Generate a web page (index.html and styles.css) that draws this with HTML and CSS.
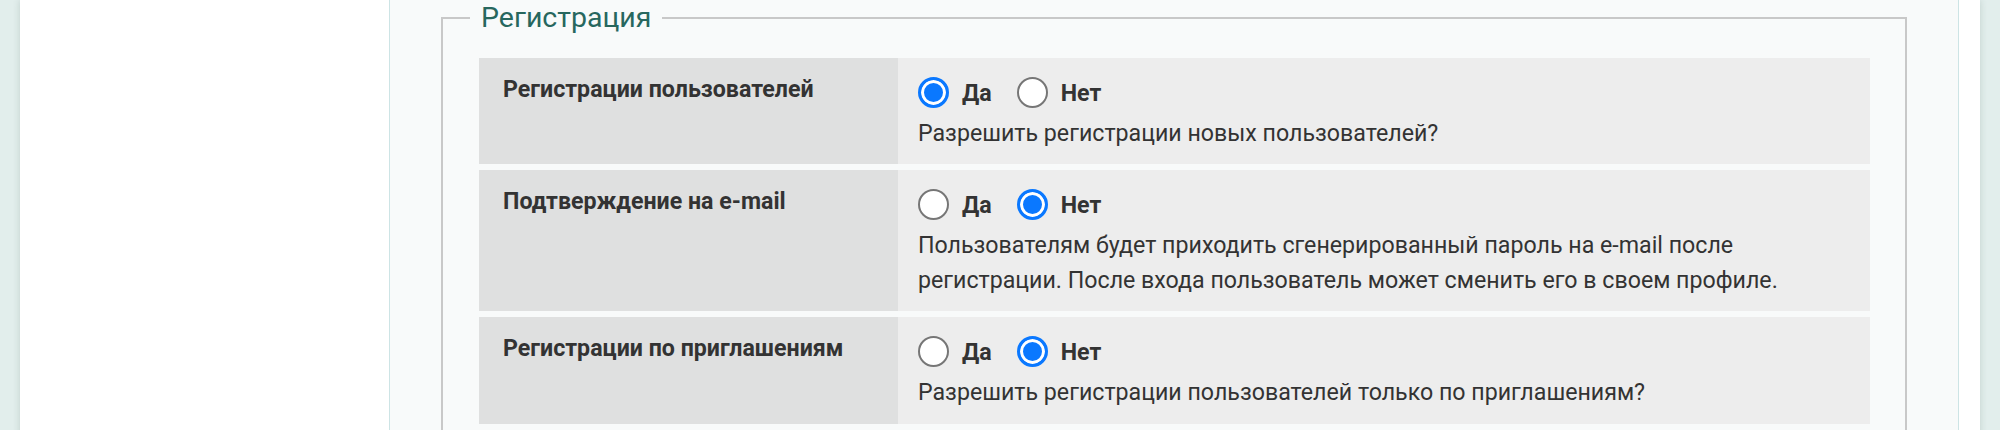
FILE: index.html
```html
<!DOCTYPE html>
<html lang="ru">
<head>
<meta charset="utf-8">
<title>Регистрация</title>
<link rel="stylesheet" href="styles.css">
</head>
<body>
<div class="page">
  <aside class="sidebar"></aside>
  <main class="content">
    <fieldset class="group">
      <legend class="group-title">Регистрация</legend>
      <div class="row">
        <div class="label">Регистрации пользователей</div>
        <div class="value">
          <div class="radios">
            <label class="opt"><input class="radio" type="radio" name="r1" checked><span>Да</span></label>
            <label class="opt"><input class="radio" type="radio" name="r1"><span>Нет</span></label>
          </div>
          <p class="desc">Разрешить регистрации новых пользователей?</p>
        </div>
      </div>
      <div class="row">
        <div class="label">Подтверждение на e-mail</div>
        <div class="value">
          <div class="radios">
            <label class="opt"><input class="radio" type="radio" name="r2"><span>Да</span></label>
            <label class="opt"><input class="radio" type="radio" name="r2" checked><span>Нет</span></label>
          </div>
          <p class="desc">Пользователям будет приходить сгенерированный пароль на e-mail после регистрации. После входа пользователь может сменить его в своем профиле.</p>
        </div>
      </div>
      <div class="row">
        <div class="label">Регистрации по приглашениям</div>
        <div class="value">
          <div class="radios">
            <label class="opt"><input class="radio" type="radio" name="r3"><span>Да</span></label>
            <label class="opt"><input class="radio" type="radio" name="r3" checked><span>Нет</span></label>
          </div>
          <p class="desc">Разрешить регистрации пользователей только по приглашениям?</p>
        </div>
      </div>
    </fieldset>
  </main>
</div>
</body>
</html>
```

FILE: styles.css
```css
html, body {
  margin: 0;
  padding: 0;
}
body {
  background: #e2eeec;
  font-family: Roboto, "Noto Sans", "Liberation Sans", sans-serif;
  color: #333;
}
.page {
  margin: 0 20px;
  display: flex;
  min-height: 100vh;
  background: #fff;
  box-shadow: 0 0 7px rgba(40, 70, 60, 0.18);
}
.sidebar {
  width: 369px;
  flex: none;
  border-right: 1px solid #cde4e5;
}
.content {
  flex: 1;
  background: #f8fafa;
  border-right: 1px solid #cde4e5;
  margin-right: 21px;
  padding: 1px 51px 0;
}
.group {
  margin: 0;
  border: 2px solid #c8c8c8;
  padding: 24px 35px 40px 36px;
}
.group-title {
  margin-left: -9px;
  padding: 0 11px;
  font-size: 28.5px;
  color: #27675e;
}
.row {
  display: grid;
  grid-template-columns: 419px 1fr;
  margin-bottom: 6px;
}
.label {
  background: #dfe0e0;
  padding: 14px 24px;
  font-weight: 700;
  font-size: 23.2px;
  line-height: 34.4px;
  color: #333;
}
.value {
  background: #ededed;
  padding: 19px 20px 14px;
}
.radios {
  display: flex;
  align-items: center;
  gap: 25px;
  height: 31px;
}
.opt {
  display: flex;
  align-items: center;
  gap: 13px;
  font-weight: 700;
  font-size: 23.2px;
  color: #333;
}
.radio {
  appearance: none;
  -webkit-appearance: none;
  width: 31px;
  height: 31px;
  margin: 0;
  border-radius: 50%;
  border: 2px solid #767676;
  background: #fff;
  box-sizing: border-box;
}
.radio:checked {
  border: 3px solid #0a78ff;
  background: #0a78ff;
  box-shadow: inset 0 0 0 3px #fff;
}
.desc {
  margin: 8px 0 0;
  font-size: 23.2px;
  line-height: 34.4px;
  color: #333;
}
```
